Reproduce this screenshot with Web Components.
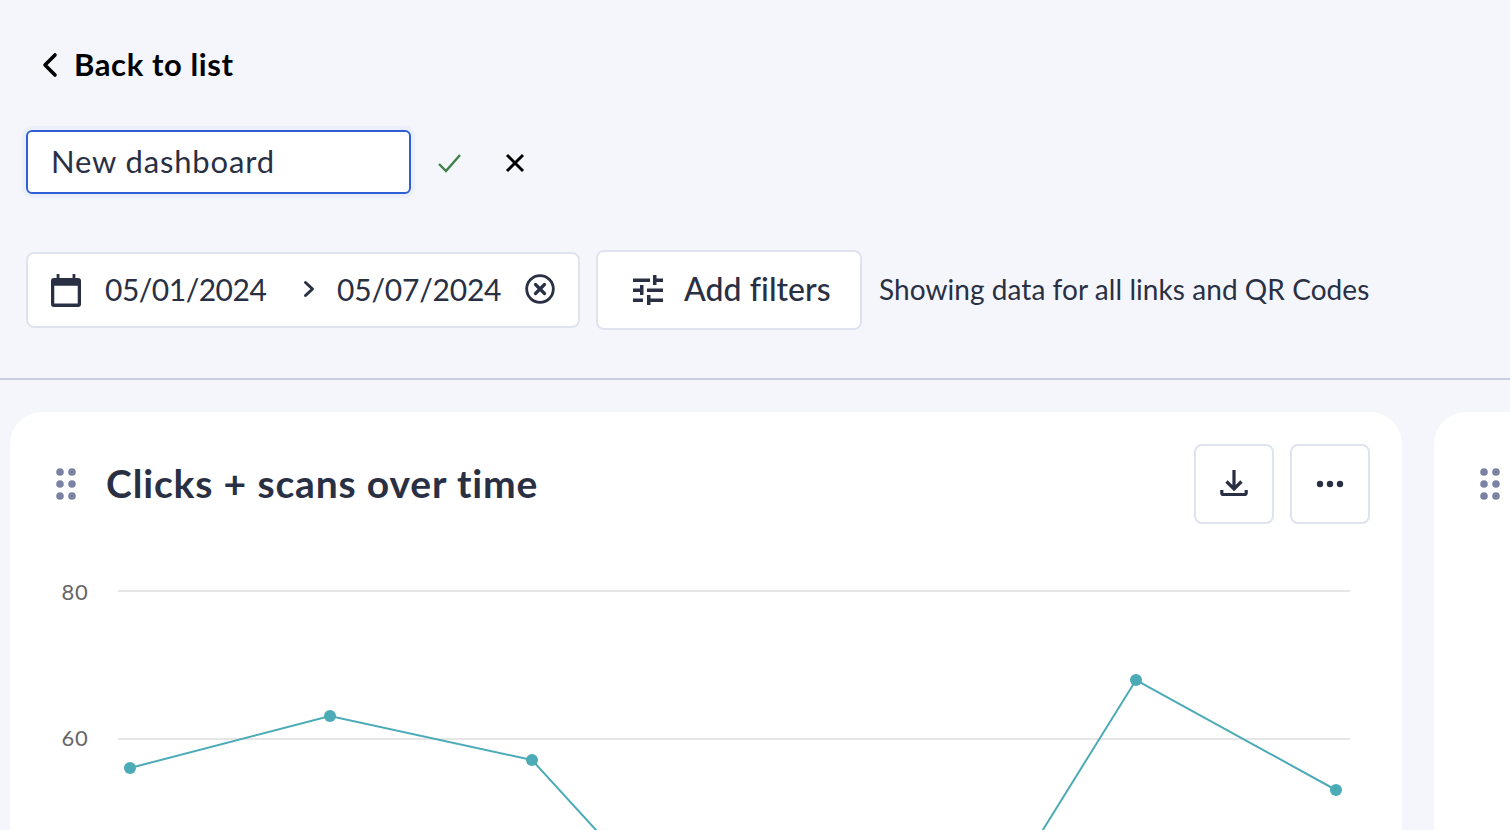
<!DOCTYPE html>
<html>
<head>
<meta charset="utf-8">
<title>New dashboard</title>
<style>
  html, body { margin: 0; height: 830px; overflow: hidden; background: #f4f6fb; }
  body { font-family: Lato, "Open Sans", sans-serif; color: #2a3044; }
</style>
</head>
<body>
<dash-page></dash-page>

<script>
const DRAG_DOTS = `
  <svg width="22" height="34" viewBox="0 0 22 34" fill="#7a83a3">
    <circle cx="4" cy="5" r="3.8"/><circle cx="16" cy="5" r="3.8"/>
    <circle cx="4" cy="17" r="3.8"/><circle cx="16" cy="17" r="3.8"/>
    <circle cx="4" cy="29" r="3.8"/><circle cx="16" cy="29" r="3.8"/>
  </svg>`;

class BackLink extends HTMLElement {
  constructor() {
    super().attachShadow({ mode: "open" }).innerHTML = /*html*/ `
      <style>
        :host { display: flex; align-items: center; gap: 16px; height: 32px; padding-left: 16px; }
        span { font-size: 31px; font-weight: 700; color: #000; letter-spacing: 0.6px; margin-bottom: 2px; }
        svg { display: block; }
      </style>
      <svg width="16" height="26" viewBox="0 0 16 26" fill="none" stroke="#000" stroke-width="3.6" stroke-linecap="round" stroke-linejoin="round">
        <path d="M13 3 3 13l10 10"/>
      </svg>
      <span><slot></slot></span>
    `;
  }
}

class NameEditor extends HTMLElement {
  constructor() {
    super().attachShadow({ mode: "open" }).innerHTML = /*html*/ `
      <style>
        :host { display: flex; align-items: center; }
        .field {
          box-sizing: border-box; width: 385px; height: 64px; padding: 0 0 2px 23px;
          display: flex; align-items: center;
          background: #fff; border: 2px solid #2f60d3; border-radius: 6px;
          box-shadow: 0 0 0 4px #ebeffb;
          font-size: 31px; color: #2a3044; letter-spacing: 0.85px;
        }
        svg { display: block; margin-top: 2px; }
        .ok { margin-left: 26px; }
        .no { margin-left: 44px; }
      </style>
      <div class="field"><slot></slot></div>
      <svg class="ok" width="24" height="20" viewBox="0 0 24 20" fill="none" stroke="#3f8048" stroke-width="2.4">
        <path d="M2 11l7 7L23 2"/>
      </svg>
      <svg class="no" width="20" height="20" viewBox="0 0 20 20" fill="none" stroke="#000" stroke-width="3">
        <path d="M2 2l16 16M18 2 2 18"/>
      </svg>
    `;
  }
}

class DateRange extends HTMLElement {
  constructor() {
    super().attachShadow({ mode: "open" }).innerHTML = /*html*/ `
      <style>
        :host {
          box-sizing: border-box; display: flex; align-items: center; width: 554px; height: 76px;
          padding-left: 23px; background: #fff; border: 2px solid #dfe3f0; border-radius: 8px;
          font-size: 30px; color: #2a3044;
        }
        svg { display: block; flex: none; }
        span { white-space: nowrap; margin-bottom: 2px; }
        .from { margin-left: 24px; width: 164px; letter-spacing: -0.5px; }
        .sep { margin-left: 34px; margin-bottom: 2px; }
        .to { margin-left: 22px; width: 167px; letter-spacing: -0.2px; }
        .clear { margin-left: 21px; margin-bottom: 2px; }
      </style>
      <svg width="30" height="33" viewBox="0 0 32 34" preserveAspectRatio="none">
        <path fill="#2a3044" d="M6 0h3v4h14V0h3v4h3a3 3 0 0 1 3 3v24a3 3 0 0 1-3 3H3a3 3 0 0 1-3-3V7a3 3 0 0 1 3-3h3zM3.500 12v18.500h25V12z"/>
      </svg>
      <span class="from">05/01/2024</span>
      <svg class="sep" width="12" height="18" viewBox="0 0 12 18" fill="none" stroke="#2a3044" stroke-width="3" stroke-linecap="round" stroke-linejoin="round">
        <path d="M2.500 2.500 9.500 9l-7 6.500"/>
      </svg>
      <span class="to">05/07/2024</span>
      <svg class="clear" width="30" height="30" viewBox="0 0 30 30" fill="none" stroke="#2a3044">
        <circle cx="15" cy="15" r="13.300" stroke-width="2.800"/>
        <path stroke-width="3.200" stroke-linecap="round" d="M10.500 10.500l9 9M19.500 10.500l-9 9"/>
      </svg>
    `;
  }
}

class FilterButton extends HTMLElement {
  constructor() {
    super().attachShadow({ mode: "open" }).innerHTML = /*html*/ `
      <style>
        :host {
          box-sizing: border-box; display: flex; align-items: center; gap: 21px; width: 266px; height: 80px;
          padding-left: 35px; background: #fff; border: 2px solid #dfe3f0; border-radius: 8px;
          font-size: 32px; font-weight: 500; letter-spacing: 0.05px; color: #2a3044;
        }
        span { margin-bottom: 3px; }
        svg { display: block; flex: none; }
      </style>
      <svg width="30" height="30" viewBox="0 0 30 30" fill="#2a3044">
        <path d="M0 3.500h17V7H0zM20 0h3.500v3.500H30V7h-6.500v3H20z"/>
        <path d="M0 13.500h7V10h3.500v10H7v-3H0zM14 13.500h16V17H14z"/>
        <path d="M0 23.500h10V27H0zM14 20h3.500v3.500H30V27H17.500v3H14z"/>
      </svg>
      <span><slot></slot></span>
    `;
  }
}

class IconButton extends HTMLElement {
  constructor() {
    super().attachShadow({ mode: "open" }).innerHTML = /*html*/ `
      <style>
        :host {
          box-sizing: border-box; display: flex; align-items: center; justify-content: center;
          width: 80px; height: 80px; background: #fff; border: 2px solid #dfe3f0; border-radius: 8px;
        }
      </style>
      <slot></slot>
    `;
  }
}

class ClicksChart extends HTMLElement {
  constructor() {
    const pts = [[120, 198], [320, 146], [522, 190], [724, 411], [926, 432], [1126, 110], [1326, 220]];
    const line = pts.map((p) => p.join(",")).join(" ");
    const dots = pts.map((p) => `<circle cx="${p[0]}" cy="${p[1]}" r="6"/>`).join("");
    super().attachShadow({ mode: "open" }).innerHTML = /*html*/ `
      <style>
        :host { display: block; height: 280px; overflow: hidden; }
        svg { display: block; }
        text { font: 22px Lato, sans-serif; fill: #666; letter-spacing: 0.8px; }
      </style>
      <svg width="1392" height="280" viewBox="0 0 1392 280">
        <path d="M108 21h1232M108 169h1232" stroke="#e6e6e6" stroke-width="2"/>
        <text x="51.500" y="30">80</text>
        <text x="51.500" y="176">60</text>
        <polyline points="${line}" fill="none" stroke="#4babb6" stroke-width="2"/>
        <g fill="#4babb6">${dots}</g>
      </svg>
    `;
  }
}

class ChartCard extends HTMLElement {
  constructor() {
    super().attachShadow({ mode: "open" }).innerHTML = /*html*/ `
      <style>
        :host {
          box-sizing: border-box; display: block; flex: none; height: 480px; padding-top: 32px;
          background: #fff; border-radius: 32px 32px 0 0;
        }
        header { display: flex; align-items: center; height: 80px; padding: 0 32px 0 46px; }
        header svg { display: block; flex: none; }
        h2 { flex: 1; margin: 0 0 3px 28px; font-size: 39px; font-weight: 700; color: #2a3044; letter-spacing: 0.85px; }
        .actions { display: flex; gap: 16px; }
        .body { margin-top: 46px; }
      </style>
      <header>
        ${DRAG_DOTS}
        <h2><slot name="title"></slot></h2>
        <div class="actions"><slot name="actions"></slot></div>
      </header>
      <div class="body"><slot></slot></div>
    `;
  }
}

class DashPage extends HTMLElement {
  constructor() {
    super().attachShadow({ mode: "open" }).innerHTML = /*html*/ `
      <style>
        :host { display: block; width: 1510px; height: 830px; overflow: hidden; background: #f4f6fb; }
        .top { box-sizing: border-box; height: 380px; padding: 49px 26px 0; border-bottom: 2px solid #c8cde0; }
        name-editor { margin-top: 49px; }
        .filters { display: flex; align-items: center; margin-top: 56px; }
        filter-button { margin-left: 16px; }
        .note { margin: 0 0 2px 17px; font-size: 28px; letter-spacing: 0.06px; color: #2a3044; white-space: nowrap; }
        .cards { display: flex; gap: 32px; margin: 32px 0 0 10px; }
        .first { width: 1392px; }
        .stub { box-sizing: border-box; height: 480px; width: 200px; padding: 55px 0 0 46px; background: #fff; border-radius: 32px 0 0 0; }
        .stub svg { display: block; }
      </style>
      <div class="top">
        <back-link>Back to list</back-link>
        <name-editor>New dashboard</name-editor>
        <div class="filters">
          <date-range></date-range>
          <filter-button>Add filters</filter-button>
          <span class="note">Showing data for all links and QR Codes</span>
        </div>
      </div>
      <div class="cards">
        <chart-card class="first">
          <span slot="title">Clicks + scans over time</span>
          <icon-button slot="actions">
            <svg width="28" height="30" viewBox="0 0 28 30" fill="none" stroke="#2a3044" stroke-width="3.200">
              <path d="M14 1v18M6.500 12.500 14 20l7.500-7.500"/>
              <path d="M1.800 21v3a1.500 1.500 0 0 0 1.500 1.500h21.400a1.500 1.500 0 0 0 1.500-1.500v-3"/>
            </svg>
          </icon-button>
          <icon-button slot="actions">
            <svg width="28" height="8" viewBox="0 0 28 8" fill="#2a3044">
              <circle cx="4" cy="4" r="3.200"/><circle cx="14" cy="4" r="3.200"/><circle cx="24" cy="4" r="3.200"/>
            </svg>
          </icon-button>
          <clicks-chart></clicks-chart>
        </chart-card>
        <div class="stub">${DRAG_DOTS}</div>
      </div>
    `;
  }
}

customElements.define("back-link", BackLink);
customElements.define("name-editor", NameEditor);
customElements.define("date-range", DateRange);
customElements.define("filter-button", FilterButton);
customElements.define("icon-button", IconButton);
customElements.define("clicks-chart", ClicksChart);
customElements.define("chart-card", ChartCard);
customElements.define("dash-page", DashPage);
</script>
</body>
</html>
